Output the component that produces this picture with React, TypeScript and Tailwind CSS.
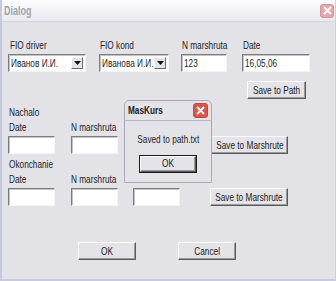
import React from 'react';

const font = "font-['Liberation_Sans',Arial,sans-serif]";
const field =
  'bg-white h-[18px] border border-t-[#7c7c7c] border-l-[#7c7c7c] border-r-[#f4f4f4] border-b-[#f4f4f4] shadow-[inset_1px_1px_0_#c4c4c4] overflow-hidden';
const btn =
  'h-[18px] flex items-center justify-center bg-[#e4e4e8] border border-t-white border-l-white border-r-[#5a5a5a] border-b-[#5a5a5a] shadow-[inset_-1px_-1px_0_#9a9a9a] text-[11px] text-[#1a1a1a] whitespace-nowrap';

// the old MS Sans Serif face is much narrower than Liberation Sans, so squeeze it
const T = ({ children, center = false }: { children: React.ReactNode; center?: boolean }) => (
  <span className={`inline-block whitespace-nowrap scale-x-75 ${center ? 'origin-center' : 'origin-left'}`}>{children}</span>
);

const Label = ({ children, className = '' }: { children: React.ReactNode; className?: string }) => (
  <div className={`text-[11px] leading-[13px] text-[#1e1e1e] whitespace-nowrap ${className}`}>
    <T>{children}</T>
  </div>
);

const Combo = ({ value, width }: { value: string; width: string }) => (
  <div className={`${field} ${width} flex items-center pl-[2px] pr-[2px]`}>
    <span className="flex-1 text-[11px] text-[#1e1e1e] overflow-hidden"><T>{value}</T></span>
    <span className="w-[12px] h-[12px] shrink-0 flex items-center justify-center bg-[#e4e4e8] border border-t-white border-l-white border-r-[#6a6a6a] border-b-[#6a6a6a]">
      <svg width="7" height="4" viewBox="0 0 7 4">
        <path d="M0 0h7L3.5 4z" fill="#111" />
      </svg>
    </span>
  </div>
);

const Input = ({ value = '', width }: { value?: string; width: string }) => (
  <div className={`${field} ${width} flex items-center pl-[2px] text-[11px] text-[#1e1e1e]`}>
    <T>{value}</T>
  </div>
);

const Button = ({ label, width }: { label: string; width: string }) => (
  <div className={`${btn} ${width}`}>
    <T center>{label}</T>
  </div>
);

const CloseX = ({ size, bg, border }: { size: string; bg: string; border: string }) => (
  <div className={`${size} ${bg} ${border} border rounded-[3px] flex items-center justify-center`}>
    <svg width="9" height="9" viewBox="0 0 9 9">
      <path d="M1 1L8 8M8 1L1 8" stroke="white" strokeWidth="1.8" />
    </svg>
  </div>
);

export default function App() {
  return (
    <div className={`${font} relative w-[336px] h-[281px] bg-[#e2e2e7] border-l-2 border-l-[#c6c9de] border-r border-r-[#d0d0da] border-b-2 border-b-[#c9cbdc] overflow-hidden`}>
      {/* title bar */}
      <div className="h-[22px] flex items-center justify-between pl-[2px] pr-[1px] bg-gradient-to-b from-[#fdfdfe] via-[#f3f3f7] to-[#e9e9ef] border-b border-b-[#d4d4de]">
        <span className="text-[12px] font-bold text-[#a3a3ad]"><T>Dialog</T></span>
        <CloseX size="w-[14px] h-[14px]" bg="bg-[#e4a8a8]" border="border-[#d69494]" />
      </div>

      <div className="pl-[6px]">
        {/* header row */}
        <div className="flex mt-[17px]">
          <div className="flex flex-col w-[91px]">
            <Label className="pl-[2px]">FIO driver</Label>
            <div className="mt-[2px]"><Combo value="Иванов И.И." width="w-[78px]" /></div>
          </div>
          <div className="flex flex-col w-[82px]">
            <Label className="pl-[1px]">FIO kond</Label>
            <div className="mt-[2px]"><Combo value="Иванова И.И." width="w-[70px]" /></div>
          </div>
          <div className="flex flex-col w-[61px]">
            <Label className="pl-[1px]">N marshruta</Label>
            <div className="mt-[2px]"><Input value="123" width="w-[46px]" /></div>
          </div>
          <div className="flex flex-col">
            <Label className="pl-[1px]">Date</Label>
            <div className="mt-[2px]"><Input value="16,05,06" width="w-[68px]" /></div>
          </div>
        </div>
        <div className="flex mt-[9px] pl-[239px]">
          <Button label="Save to Path" width="w-[59px]" />
        </div>

        {/* Nachalo */}
        <Label className="mt-[7px] pl-[1px]">Nachalo</Label>
        <div className="flex mt-[2px] items-end">
          <div className="flex flex-col w-[63px]">
            <Label className="pl-[1px]">Date</Label>
            <div className="mt-[2px]"><Input width="w-[47px]" /></div>
          </div>
          <div className="flex flex-col w-[62px]">
            <Label>N marshruta</Label>
            <div className="mt-[2px]"><Input width="w-[47px]" /></div>
          </div>
          <div className="w-[78px]"><Input width="w-[47px]" /></div>
          <Button label="Save to Marshrute" width="w-[77px]" />
        </div>

        {/* Okonchanie */}
        <Label className="mt-[4px] pl-[1px]">Okonchanie</Label>
        <div className="flex mt-[2px] items-end">
          <div className="flex flex-col w-[63px]">
            <Label className="pl-[1px]">Date</Label>
            <div className="mt-[2px]"><Input width="w-[47px]" /></div>
          </div>
          <div className="flex flex-col w-[62px]">
            <Label>N marshruta</Label>
            <div className="mt-[2px]"><Input width="w-[47px]" /></div>
          </div>
          <div className="w-[77px]"><Input width="w-[47px]" /></div>
          <Button label="Save to Marshrute" width="w-[78px]" />
        </div>

        {/* OK / Cancel */}
        <div className="flex mt-[36px] pl-[70px] gap-[42px]">
          <Button label="OK" width="w-[58px]" />
          <Button label="Cancel" width="w-[58px]" />
        </div>
      </div>

      {/* message box */}
      <div className="absolute left-[122px] top-[100px] w-[88px] h-[83px] bg-[#e4e4e8] border border-[#a9abbd] rounded-t-[5px] flex flex-col">
        <div className="h-[20px] flex items-center justify-between pl-[3px] pr-[3px] border-b border-b-[#b6b8c8]">
          <span className="text-[11px] font-bold text-[#1a1a1a]"><T>MasKurs</T></span>
          <CloseX size="w-[15px] h-[15px]" bg="bg-[#d9574a]" border="border-[#b84a40]" />
        </div>
        <div className="flex-1 flex flex-col items-center">
          <div className="mt-[10px] text-[11px] text-[#1e1e1e]"><T center>Saved to path.txt</T></div>
          <div className="mt-[7px] w-[58px] h-[18px] border border-[#1a1a1a]">
            <Button label="OK" width="w-full h-full" />
          </div>
        </div>
      </div>
    </div>
  );
}
